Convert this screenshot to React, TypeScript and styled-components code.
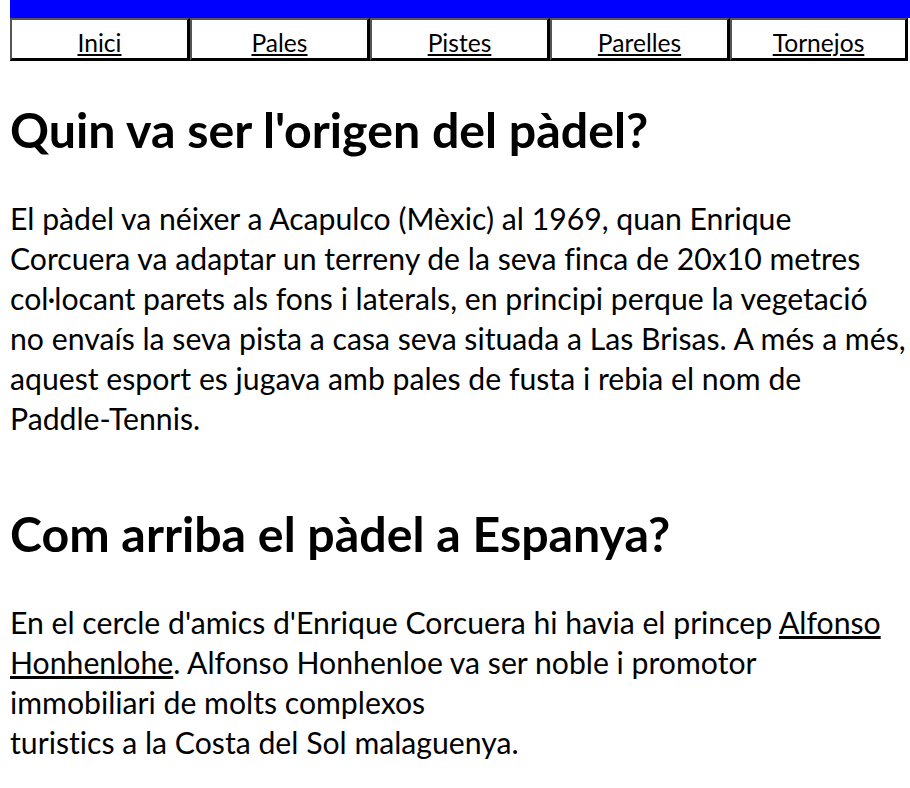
import React from "react";
import styled, { createGlobalStyle } from "styled-components";

const GlobalStyle = createGlobalStyle`
  html, body {
    margin: 0;
    padding: 0;
    background: #ffffff;
  }
  body {
    font-family: "Lato", "Noto Sans", sans-serif;
    font-variant-ligatures: no-common-ligatures;
    color: #000000;
  }
`;

const Page = styled.div`
  padding-left: 10px;
  width: 900px;
`;

const TopBar = styled.header`
  height: 18px;
  background: #0000ff;
`;

const Nav = styled.nav`
  display: grid;
  grid-template-columns: repeat(4, 180px) 178px;
`;

const NavCell = styled.div`
  height: 43px;
  box-sizing: border-box;
  border-style: solid;
  border-width: 2px 3px 3px 2px;
  border-color: #555555 #000000 #000000 #555555;
  background: #ffffff;
  text-align: center;
  padding-top: 7px;
`;

const NavLink = styled.a`
  font-size: 24.6px;
  line-height: 31px;
  color: #000000;
  text-decoration: underline;
`;

const Heading = styled.h1<{ $top: number }>`
  margin: ${(p) => p.$top}px 0 0 0;
  font-size: 48.3px;
  line-height: 64px;
  font-weight: 700;
`;

const Paragraph = styled.p<{ $width: number }>`
  margin: 37px 0 0 0;
  width: ${(p) => p.$width}px;
  font-size: 30.2px;
  line-height: 40px;
`;

const Keep = styled.span`
  white-space: nowrap;
`;

const InlineLink = styled.a`
  color: #000000;
  text-decoration: underline;
`;

const navItems = ["Inici", "Pales", "Pistes", "Parelles", "Tornejos"];

export default function App() {
  return (
    <>
      <GlobalStyle />
      <Page>
        <TopBar />
        <Nav>
          {navItems.map((item) => (
            <NavCell key={item}>
              <NavLink href="#">{item}</NavLink>
            </NavCell>
          ))}
        </Nav>
        <Heading $top={36}>Quin va ser l'origen del pàdel?</Heading>
        <Paragraph $width={900}>
          El pàdel va néixer a Acapulco (Mèxic) al 1969, quan Enrique Corcuera va adaptar un
          terreny de la seva finca de 20x10 metres col·locant parets als fons i laterals, en
          principi perque la vegetació <Keep>no envaís</Keep> la seva pista a casa seva situada a
          Las Brisas. A més a més, aquest esport es jugava amb pales de fusta i rebia el nom de{" "}
          <Keep>Paddle-Tennis.</Keep>
        </Paragraph>
        <Heading $top={63}>Com arriba el pàdel a Espanya?</Heading>
        <Paragraph $width={895}>
          En el cercle d'amics d'Enrique Corcuera hi havia el princep{" "}
          <InlineLink href="#">Alfonso Honhenlohe</InlineLink>. Alfonso Honhenloe va ser noble i
          promotor immobiliari de molts complexos
          <br />
          turistics a la Costa del Sol malaguenya.
        </Paragraph>
      </Page>
    </>
  );
}
